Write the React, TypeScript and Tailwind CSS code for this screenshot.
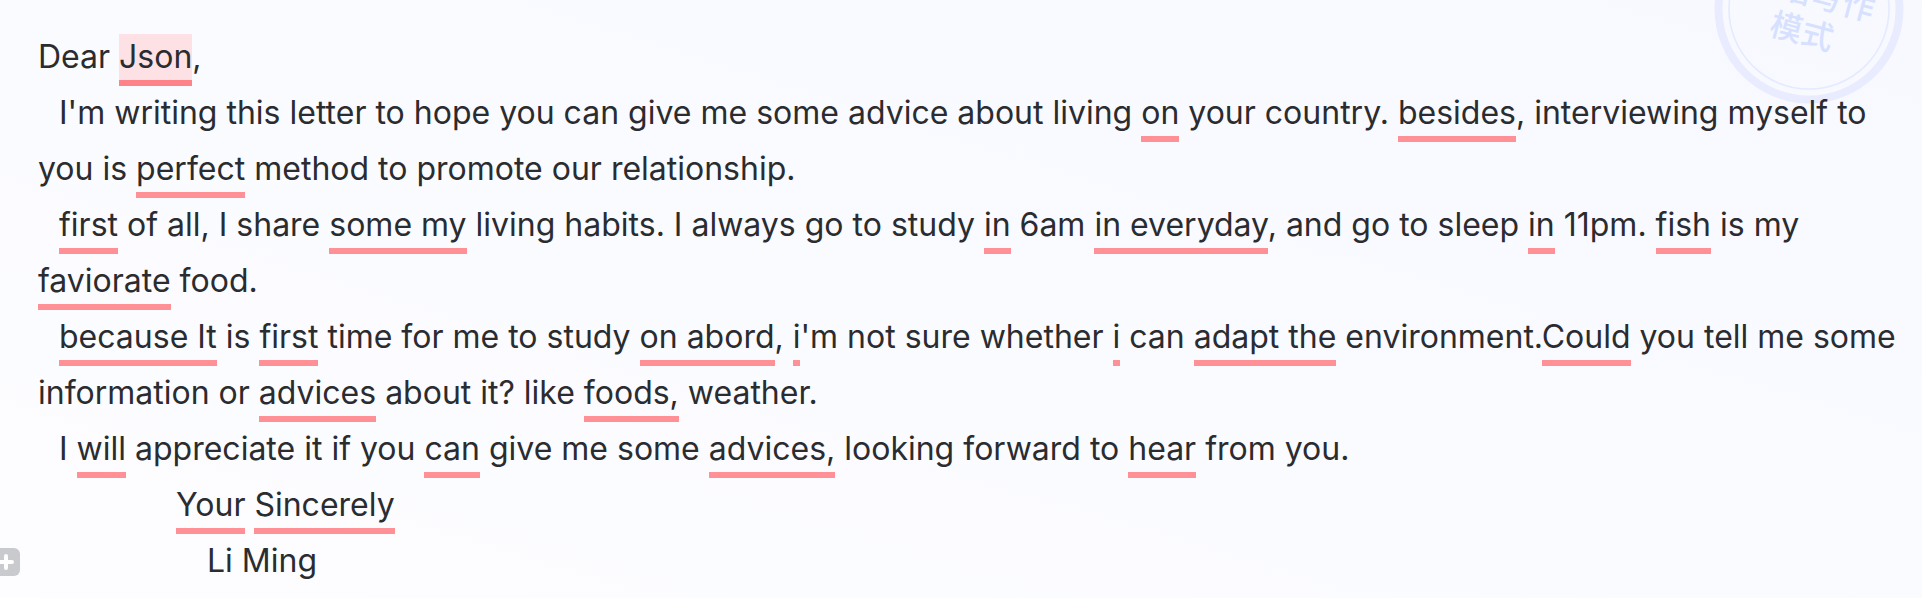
import React from "react";

function Mark({ children, active = false }: { children: React.ReactNode; active?: boolean }) {
  return (
    <mark
      className={
        active
          ? "border-b-[6px] border-[#fe8389] bg-[#fde1e4] pt-[3px] pb-1 text-inherit"
          : "border-b-[6px] border-[#ff9196] bg-transparent pb-1 text-inherit"
      }
    >
      {children}
    </mark>
  );
}

function Stamp() {
  return (
    <svg
      className="absolute -top-[86px] right-[18px] h-[190px] w-[190px]"
      viewBox="0 0 190 190"
      fill="none"
      role="img"
      aria-label="英语写作模式"
    >
      <circle cx="95" cy="95" r="90.5" stroke="#e9ecff" strokeWidth="8" />
      <circle cx="95" cy="95" r="80" stroke="#e4eaff" strokeWidth="1.6" />
      <g
        transform="rotate(15 95 95)"
        fill="#d6e1ff"
        fontFamily="'Noto Sans CJK SC', sans-serif"
        fontSize="32"
        fontWeight="500"
        textAnchor="middle"
      >
        <text x="94" y="91">英语写作</text>
        <text x="94" y="130">模式</text>
      </g>
    </svg>
  );
}

export default function App() {
  return (
    <main className="relative min-h-screen overflow-hidden bg-linear-to-bl from-[#f8f9ff] via-[#fafbff] to-[#fdfdff] font-['Inter','Noto_Sans_CJK_SC',sans-serif] text-[32px] leading-[56px] text-[#2b2c30]">
      <Stamp />
      <article className="relative pt-[29px] pr-5 pb-2 pl-[38px]">
        <p>
          Dear <Mark active>Json</Mark>,
        </p>
        <p className="indent-[21px]">
          I'm writing this letter to hope you can give me some advice about living <Mark>on</Mark> your
          country. <Mark>besides</Mark>, interviewing myself to you is <Mark>perfect</Mark> method to
          promote our relationship.
        </p>
        <p className="indent-[21px]">
          <Mark>first</Mark> of all, I share <Mark>some my</Mark> living habits. I always go to study{" "}
          <Mark>in</Mark> 6am <Mark>in everyday</Mark>, and go to sleep <Mark>in</Mark> 11pm.{" "}
          <Mark>fish</Mark> is my <Mark>faviorate</Mark> food.
        </p>
        <p className="indent-[21px]">
          <Mark>because It</Mark> is <Mark>first</Mark> time for me to study <Mark>on abord</Mark>,{" "}
          <Mark>i</Mark>'m not sure whether <Mark>i</Mark> can <Mark>adapt the</Mark> environment.
          <Mark>Could</Mark> you tell me some information or <Mark>advices</Mark> about it? like{" "}
          <Mark>foods,</Mark> weather.
        </p>
        <p className="indent-[21px]">
          I <Mark>will</Mark> appreciate it if you <Mark>can</Mark> give me some <Mark>advices,</Mark>{" "}
          looking forward to <Mark>hear</Mark> from you.
        </p>
        <p className="indent-[138px]">
          <Mark>Your</Mark> <Mark>Sincerely</Mark>
        </p>
        <p className="indent-[169px]">Li Ming</p>
      </article>
      <button
        type="button"
        aria-label="Add"
        className="absolute top-[548px] -left-2 flex h-7 w-7 items-center justify-center rounded-md bg-[#c9cacd]"
      >
        <svg className="h-4 w-4" viewBox="0 0 16 16" stroke="#fff" strokeWidth="4" strokeLinecap="round">
          <path d="M8 2v12M2 8h12" />
        </svg>
      </button>
    </main>
  );
}
